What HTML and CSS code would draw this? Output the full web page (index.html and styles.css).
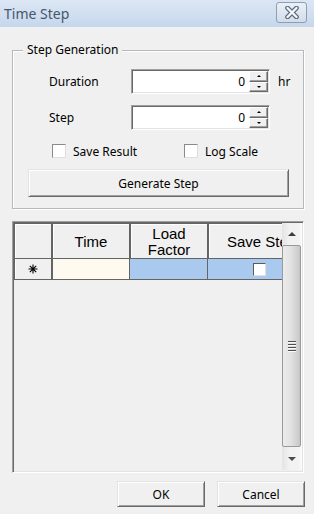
FILE: index.html
```html
<!DOCTYPE html>
<html>
<head>
<meta charset="utf-8">
<link rel="stylesheet" href="styles.css">
</head>
<body>
<div class="titlebar">
  <span class="title">Time Step</span>
  <span class="close">
    <svg width="18" height="13" viewBox="0 0 18 13">
      <path d="M4.5 2 L13.5 11 M13.5 2 L4.5 11" stroke="#5b6a7e" stroke-width="4.6" stroke-linecap="round"/>
      <path d="M4.5 2 L13.5 11 M13.5 2 L4.5 11" stroke="#f4f6f9" stroke-width="2.4" stroke-linecap="round"/>
    </svg>
  </span>
</div>

<div class="group">
  <div class="legend">Step Generation</div>
  <div class="field-row first">
    <span class="field-label">Duration</span>
    <div class="spin-input">
      <span class="value">0</span>
      <div class="spin">
        <span class="spin-btn"><i class="arrow-up"></i></span>
        <span class="spin-btn"><i class="arrow-down"></i></span>
      </div>
    </div>
    <span class="unit">hr</span>
  </div>
  <div class="field-row">
    <span class="field-label">Step</span>
    <div class="spin-input">
      <span class="value">0</span>
      <div class="spin">
        <span class="spin-btn"><i class="arrow-up"></i></span>
        <span class="spin-btn"><i class="arrow-down"></i></span>
      </div>
    </div>
  </div>
  <div class="check-row">
    <label class="check-item wide"><span class="checkbox"></span><span>Save Result</span></label>
    <label class="check-item"><span class="checkbox"></span><span>Log Scale</span></label>
  </div>
  <div class="btn gen-btn">Generate Step</div>
</div>

<div class="grid">
  <div class="grid-main">
    <table class="table">
      <colgroup>
        <col class="c-hdr"><col class="c-time"><col class="c-load"><col class="c-save">
      </colgroup>
      <tr class="head-row">
        <th></th>
        <th>Time</th>
        <th>Load<br>Factor</th>
        <th class="clip">Save Step</th>
      </tr>
      <tr class="data-row">
        <td class="row-hdr">
          <svg width="10" height="10" viewBox="0 0 10 10">
            <path d="M5 0.5 V9.5 M0.5 5 H9.5 M1.8 1.8 L8.2 8.2 M8.2 1.8 L1.8 8.2" stroke="#000" stroke-width="1.1"/>
          </svg>
        </td>
        <td class="cell-time"></td>
        <td class="cell-blue"></td>
        <td class="cell-blue cell-check"><span class="checkbox small"></span></td>
      </tr>
    </table>
  </div>
  <div class="vscroll">
    <div class="sb-arrow"><i class="sb-up"></i></div>
    <div class="sb-thumb">
      <span class="grip"></span><span class="grip"></span><span class="grip"></span><span class="grip"></span>
    </div>
    <div class="sb-arrow down"><i class="sb-down"></i></div>
  </div>
</div>

<div class="footer">
  <div class="btn foot-btn">OK</div>
  <div class="btn foot-btn">Cancel</div>
</div>
</body>
</html>
```

FILE: styles.css
```css
* { box-sizing: border-box; }

body {
  margin: 0;
  width: 314px;
  height: 514px;
  overflow: hidden;
  background: #f0f0f0;
  font-family: "Noto Sans", "DejaVu Sans", sans-serif;
  font-size: 12px;
  color: #000;
}

.titlebar {
  height: 27px;
  background: linear-gradient(#dce7f4, #c6d7ec);
  display: flex;
  align-items: center;
  justify-content: space-between;
  padding: 0 7px 0 4px;
}

.title {
  font-size: 14px;
  color: #46576c;
  line-height: 18px;
}

.close {
  width: 31px;
  height: 21px;
  border: 1px solid #8d9db2;
  border-radius: 3px;
  background: linear-gradient(#eaf0f7, #d2dde9);
  display: flex;
  align-items: center;
  justify-content: center;
  margin-top: -2px;
}

.group {
  margin: 23px 10px 0 12px;
  border: 1px solid #b5b9bd;
  box-shadow: inset 1px 1px 0 #fff, 1px 1px 0 #fff;
  padding: 0 0 11px 0;
}

.legend {
  margin: -8px 0 0 10px;
  padding: 0 4px;
  width: fit-content;
  background: #f0f0f0;
  line-height: 14px;
  height: 14px;
}

.field-row {
  display: flex;
  align-items: center;
  height: 25px;
  margin-top: 11px;
  padding-left: 36px;
}
.field-row.first { margin-top: 12px; }

.field-label { width: 82px; }

.spin-input {
  width: 139px;
  height: 25px;
  background: #fff;
  border: 1px solid;
  border-color: #a0a0a0 #fff #fff #a0a0a0;
  box-shadow: inset 1px 1px 0 #696969, inset -1px -1px 0 #e3e3e3;
  display: flex;
  padding: 1px 1px 1px 1px;
}

.value {
  flex: 1;
  text-align: right;
  padding-right: 4px;
  line-height: 21px;
}

.spin {
  width: 19px;
  display: flex;
  flex-direction: column;
}

.spin-btn {
  flex: 1;
  background: #f0f0f0;
  border: 1px solid;
  border-color: #fff #696969 #696969 #fff;
  box-shadow: inset -1px -1px 0 #a0a0a0;
  display: flex;
  align-items: center;
  justify-content: center;
}

.arrow-up, .arrow-down {
  width: 0;
  height: 0;
  border-left: 2px solid transparent;
  border-right: 2px solid transparent;
}
.arrow-up { border-bottom: 2px solid #000; }
.arrow-down { border-top: 2px solid #000; }

.unit { margin-left: 8px; }

.check-row {
  display: flex;
  align-items: center;
  height: 14px;
  margin-top: 14px;
  padding-left: 39px;
}

.check-item {
  display: flex;
  align-items: center;
  gap: 7px;
}
.check-item.wide { width: 132px; }

.checkbox {
  width: 14px;
  height: 14px;
  background: #fff;
  border: 1px solid;
  border-color: #8a8a8a #dedede #dedede #8a8a8a;
  display: inline-block;
}
.checkbox.small {
  width: 13px;
  height: 13px;
  border-color: #5a5a5a #e0e0e0 #e0e0e0 #5a5a5a;
}

.btn {
  background: #f0f0f0;
  border: 1px solid;
  border-color: #e3e3e3 #696969 #696969 #e3e3e3;
  box-shadow: inset 1px 1px 0 #fff, inset -1px -1px 0 #a0a0a0;
  display: flex;
  align-items: center;
  justify-content: center;
}

.gen-btn {
  margin: 11px 0 0 15px;
  width: 261px;
  height: 28px;
}

.grid {
  margin: 12px 10px 0 12px;
  height: 252px;
  border: 1px solid;
  border-color: #a0a0a0 #fff #fff #a0a0a0;
  box-shadow: inset 1px 1px 0 #696969, inset -1px -1px 0 #e3e3e3;
  padding: 1px 1px 2px 1px;
  display: flex;
}

.grid-main {
  flex: 1;
  overflow: hidden;
  background: #f0f0f0;
}

.table {
  border-collapse: separate;
  border-spacing: 0;
  table-layout: fixed;
  width: 298px;
  font-family: "Liberation Sans", Arial, sans-serif;
  font-size: 15px;
}

.c-hdr { width: 38px; }
.c-time { width: 78px; }
.c-load { width: 78px; }
.c-save { width: 104px; }

.head-row th {
  height: 36px;
  padding: 1px 0 0 0;
  font-weight: normal;
  line-height: 16px;
  background: #f0f0f0;
  border: 1px solid #646464;
  box-shadow: inset 1px 1px 0 #fff;
  text-align: center;
  white-space: nowrap;
  overflow: hidden;
}
.head-row th.clip { text-align: left; padding-left: 18px; }

.data-row td {
  height: 21px;
  padding: 0;
  border: 1px solid #646464;
  border-top: none;
}

.row-hdr {
  background: #f0f0f0;
  text-align: center;
  box-shadow: inset 1px 0 0 #fff;
}
.row-hdr svg { display: block; margin: 0 auto; }

.cell-time { background: #fffaf0; }
.cell-blue { background: #a9c9ee; border-color: #7a7a7a; }
.data-row td.cell-blue { border-left: none; }
.cell-check { padding-left: 45px !important; }
.cell-check .checkbox { display: block; }

.vscroll {
  width: 20px;
  display: flex;
  flex-direction: column;
  background: linear-gradient(90deg, #e4e4e4, #f2f2f2 40%, #f2f2f2 85%, #fdfdfd);
}

.sb-arrow {
  height: 22px;
  display: flex;
  align-items: center;
  justify-content: center;
}
.sb-arrow.down { height: 23px; }

.sb-up, .sb-down {
  width: 0;
  height: 0;
  border-left: 4px solid transparent;
  border-right: 4px solid transparent;
}
.sb-up { border-bottom: 4px solid #3c3c3c; }
.sb-down { border-top: 4px solid #4a4a4a; }

.sb-thumb {
  flex: 1;
  margin: 0 1px 0 0;
  border: 1px solid #9a9a9a;
  border-radius: 2px;
  background: linear-gradient(90deg, #ececec, #e2e2e2 45%, #d2d2d2 80%, #c6c6c6);
  display: flex;
  flex-direction: column;
  align-items: center;
  justify-content: center;
  gap: 2px;
}

.grip {
  width: 8px;
  height: 1px;
  background: #4f4f4f;
  box-shadow: 0 1px 0 #fafafa;
}

.footer {
  display: flex;
  justify-content: flex-end;
  gap: 12px;
  padding-right: 9px;
  margin-top: 8px;
}

.foot-btn {
  width: 88px;
  height: 26px;
}
```
